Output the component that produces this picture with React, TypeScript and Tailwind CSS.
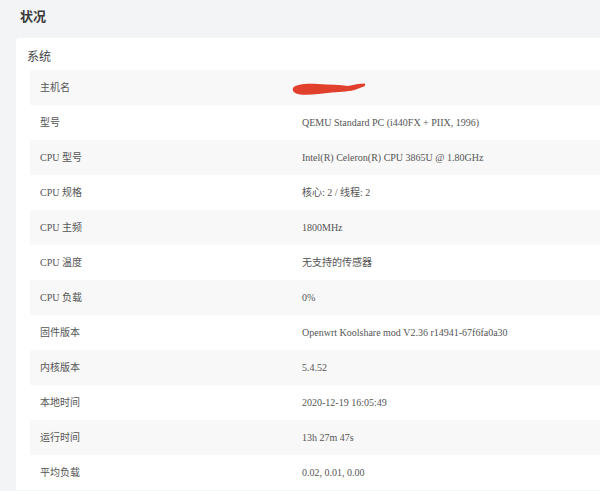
const ROWS: [string, string][] = [
  ['主机名', ''],
  ['型号', 'QEMU Standard PC (i440FX + PIIX, 1996)'],
  ['CPU 型号', 'Intel(R) Celeron(R) CPU 3865U @ 1.80GHz'],
  ['CPU 规格', '核心: 2 / 线程: 2'],
  ['CPU 主频', '1800MHz'],
  ['CPU 温度', '无支持的传感器'],
  ['CPU 负载', '0%'],
  ['固件版本', 'Openwrt Koolshare mod V2.36 r14941-67f6fa0a30'],
  ['内核版本', '5.4.52'],
  ['本地时间', '2020-12-19 16:05:49'],
  ['运行时间', '13h 27m 47s'],
  ['平均负载', '0.02, 0.01, 0.00'],
]

function Scribble() {
  // red marker scribble hiding the hostname
  return (
    <svg width="74" height="14" viewBox="0 0 74 14" className="block -ml-[10px] mt-[2px]" aria-hidden="true">
      <path
        d="M1 6 C 4 2, 14 1.5, 26 2 C 38 2.5, 48 3, 56 4 L 66 2 L 73 1.5 L 73 4 L 64 7.5 C 58 9.5, 50 9.5, 40 10.5 C 28 12, 16 13.5, 8 12.5 C 2 11.5, 0 9, 1 6 Z"
        fill="#e0402c"
      />
    </svg>
  )
}

export default function App() {
  return (
    <div className="w-[600px] h-[491px] overflow-hidden bg-[#f3f4f5] font-['Liberation_Serif','Noto_Sans_CJK_SC',serif] text-[#555]">
      <div className="pl-[20px] pt-[9px] h-[38px]">
        <h1 className="text-[13px] font-bold text-[#3a3a3a] leading-[16px]">状况</h1>
      </div>

      <div className="ml-[16px] bg-white rounded-tl-[3px] pl-[14px] pt-[11px]">
        <h2 className="-ml-[3px] text-[12px] text-[#444] leading-[16px] mb-[5px]">系统</h2>

        <div className="flex flex-col">
          {ROWS.map(([label, value], i) => (
            <div
              key={label}
              className={`flex items-center h-[35px] text-[10px] ${i % 2 === 0 ? 'bg-[#f8f8f8]' : 'bg-white'}`}
            >
              <div className="w-[262px] pl-[10px] shrink-0">{label}</div>
              <div className="pl-[10px]">{i === 0 ? <Scribble /> : value}</div>
            </div>
          ))}
        </div>
      </div>
    </div>
  )
}
